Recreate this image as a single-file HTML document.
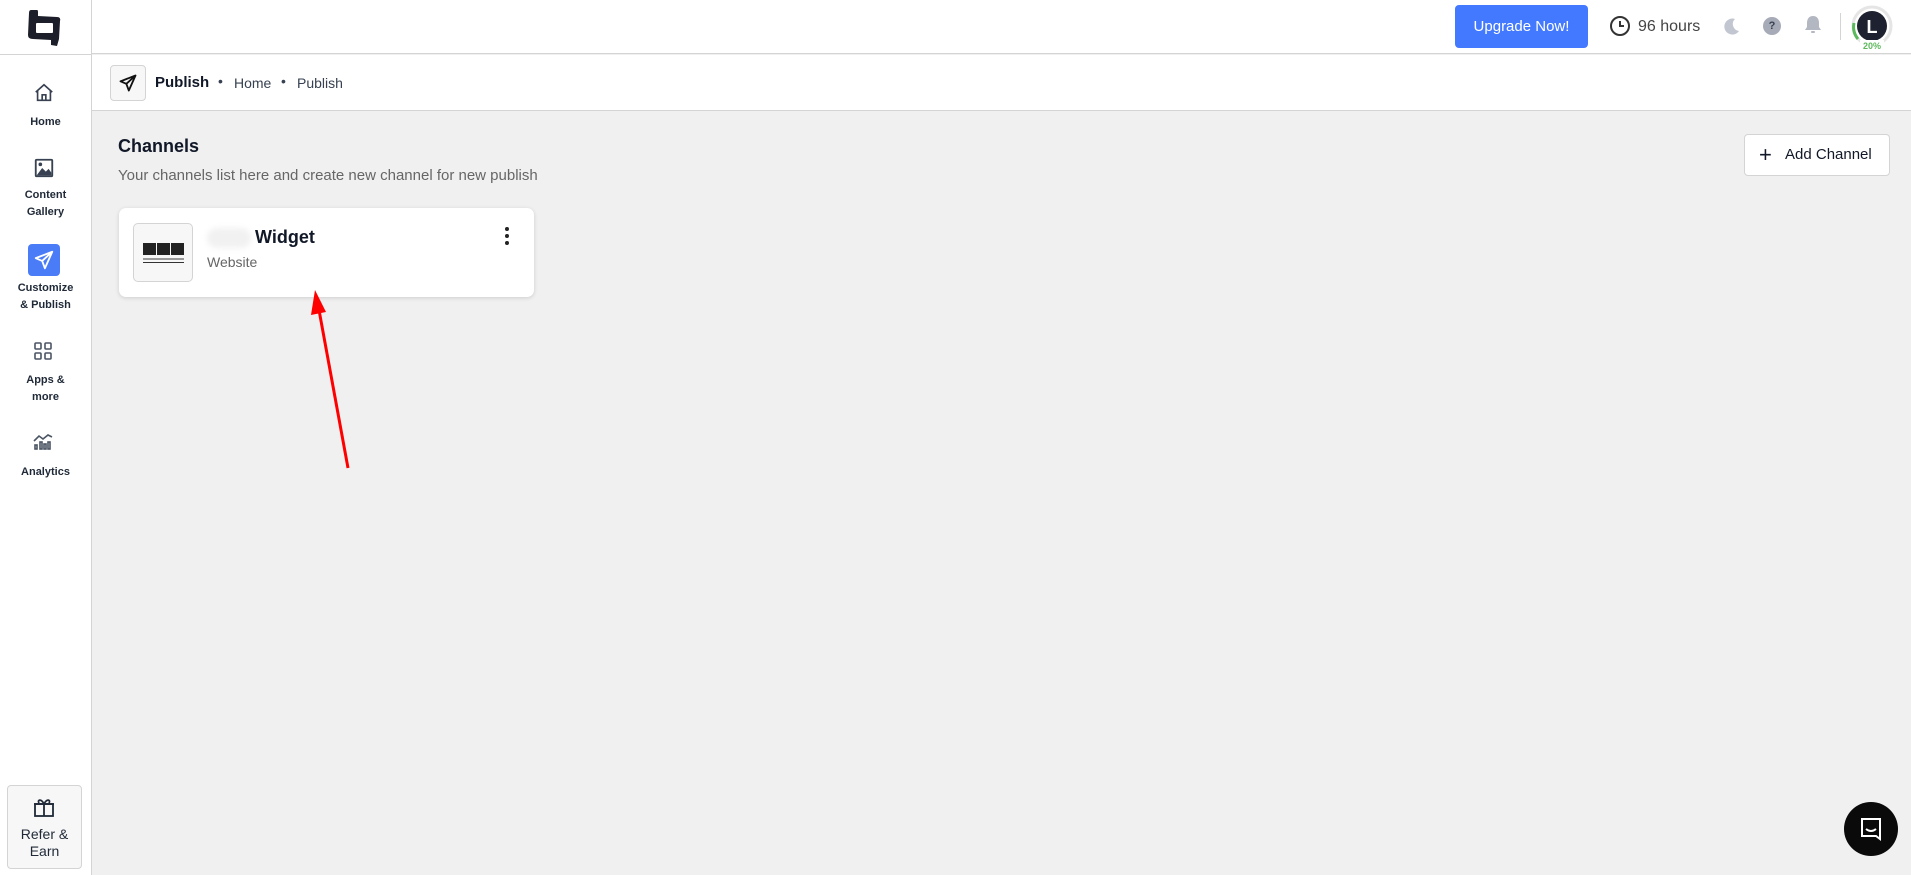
<!DOCTYPE html>
<html><head><meta charset="utf-8"><style>
*{box-sizing:border-box;margin:0;padding:0}
body{width:1911px;height:875px;overflow:hidden;font-family:"Liberation Sans",sans-serif;background:#f0f0f0;position:relative;color:#111827}
.abs{position:absolute}
#side{left:0;top:0;width:92px;height:875px;background:#fff;border-right:1px solid #d4d4d4}
#top{left:92px;top:0;right:0;height:54px;background:#fff;border-bottom:1px solid #d4d4d4}
#logoline{left:0;top:54px;width:92px;height:1px;background:#d4d4d4}
#crumb{left:92px;top:55px;right:0;height:56px;background:#fff;border-bottom:1px solid #d4d4d4}
.lbl{position:absolute;left:0;width:91px;text-align:center;font-size:11px;font-weight:bold;color:#1f2937;line-height:17px}
.ico{position:absolute;left:33px}
</style></head><body>
<div id="side" class="abs">
  <svg class="abs" style="left:26px;top:9px" width="36" height="38" viewBox="0 0 36 38"><path d="M5 1 L11 1 Q12 1 12 3 L12 7 L31 8 Q35 8 34 12 L33 30 L31 37 L25 36 L25 31 L7 30 Q2 30 2 26 L3 4 Q3 1 5 1Z" fill="#1c1f2a"/><rect x="10" y="14" width="17" height="10" rx="1" fill="#fff"/></svg>
  <svg class="ico" style="top:82px" width="22" height="22" viewBox="0 0 24 24" fill="none" stroke="#374151" stroke-width="1.8"><path d="M3 11 L12 3 L21 11 M5 9 V20 H19 V9 M10 20 V14 H14 V20"/></svg>
  <div class="lbl" style="top:114px">Home</div>
  <svg class="ico" style="top:157px" width="22" height="22" viewBox="0 0 24 24"><rect x="3" y="3" width="18" height="18" rx="1" fill="none" stroke="#374151" stroke-width="2"/><path d="M4 20 L10 12 L14 16 L17 13 L20 17 V20Z" fill="#374151"/><circle cx="8" cy="8" r="2" fill="#374151"/></svg>
  <div class="lbl" style="top:187px">Content<br>Gallery</div>
  <div class="abs" style="left:28px;top:244px;width:32px;height:32px;background:#4a7cf7;border-radius:4px"></div>
  <svg class="abs" style="left:33px;top:249px" width="22" height="22" viewBox="0 0 24 24" fill="none" stroke="#fff" stroke-width="2" stroke-linejoin="round"><path d="M21 3 L3 10 L10 13 L13 21 Z M10 13 L21 3"/></svg>
  <div class="lbl" style="top:280px">Customize<br>&amp; Publish</div>
  <svg class="ico" style="top:341px" width="20" height="20" viewBox="0 0 20 20" fill="none" stroke="#4b5563" stroke-width="1.6"><rect x="2" y="2" width="6" height="6" rx="1"/><rect x="12" y="2" width="6" height="6" rx="1"/><rect x="2" y="12" width="6" height="6" rx="1"/><rect x="12" y="12" width="6" height="6" rx="1"/></svg>
  <div class="lbl" style="top:372px">Apps &amp;<br>more</div>
  <svg class="ico" style="top:433px" width="20" height="18" viewBox="0 0 20 18" fill="none" stroke="#4b5563" stroke-width="1.6"><path d="M1 8 L6 3 L10 6 L15 2 L19 4"/><rect x="2" y="12" width="2" height="4"/><rect x="7" y="9" width="2" height="7"/><rect x="11" y="11" width="2" height="5"/><rect x="15" y="9" width="2" height="7"/></svg>
  <div class="lbl" style="top:464px">Analytics</div>
  <div class="abs" style="left:7px;top:785px;width:75px;height:84px;border:1px solid #d4d4d4;border-radius:4px;background:#f7f7f7"></div>
  <svg class="abs" style="left:32px;top:795px" width="24" height="24" viewBox="0 0 24 24" fill="none" stroke="#1f2937" stroke-width="1.8"><rect x="3" y="9" width="18" height="12"/><path d="M2 9 H22 M12 9 V21 M12 9 C9 3 5 5 7 8 M12 9 C15 3 19 5 17 8"/></svg>
  <div class="abs" style="left:7px;top:826px;width:75px;text-align:center;font-size:14px;line-height:17px;color:#1f2937">Refer &amp;<br>Earn</div>
</div>
<div id="logoline" class="abs"></div>
<div id="top" class="abs">
  <div class="abs" style="left:1363px;top:5px;width:133px;height:43px;background:#4379ff;border-radius:4px;color:#fff;font-size:15px;text-align:center;line-height:43px">Upgrade Now!</div>
  <svg class="abs" style="left:1517px;top:15px" width="22" height="22" viewBox="0 0 22 22" fill="none" stroke="#333" stroke-width="2"><circle cx="11" cy="11" r="9"/><path d="M11 6 V11 H15"/></svg>
  <div class="abs" style="left:1546px;top:18px;font-size:16px;color:#444">96 hours</div>
  <svg class="abs" style="left:1631px;top:17px" width="18" height="18" viewBox="0 0 18 18"><path d="M12 2 A8 8 0 1 0 16 14 A7 7 0 0 1 12 2Z" fill="#c2c6d0"/></svg>
  <div class="abs" style="left:1671px;top:17px;width:18px;height:18px;border-radius:50%;background:#a7abb8;color:#374151;font-size:11px;font-weight:bold;text-align:center;line-height:18px">?</div>
  <svg class="abs" style="left:1712px;top:15px" width="18" height="20" viewBox="0 0 18 20"><path d="M9 1 C5 1 3 4 3 8 V12 L1 15 H17 L15 12 V8 C15 4 13 1 9 1Z" fill="#b3b7c2"/><rect x="7" y="16" width="4" height="2" rx="1" fill="#b3b7c2"/></svg>
  <div class="abs" style="left:1748px;top:13px;width:1px;height:27px;background:#d4d4d4"></div>
  <svg class="abs" style="left:1758px;top:5px" width="44" height="46" viewBox="0 0 44 46"><circle cx="22" cy="21" r="19" fill="none" stroke="#e5e5e5" stroke-width="3"/><path d="M8 34 A19 19 0 0 1 4 18" fill="none" stroke="#5cb85c" stroke-width="3"/><circle cx="22" cy="21" r="15" fill="#1e2230"/><text x="22" y="28" font-family="Liberation Sans" font-weight="bold" font-size="18" fill="#fff" text-anchor="middle">L</text><rect x="10" y="35" width="24" height="11" fill="#fff"/><text x="22" y="44" font-family="Liberation Sans" font-weight="bold" font-size="9" fill="#5cb85c" text-anchor="middle">20%</text></svg>
</div>
<div id="crumb" class="abs">
  <div class="abs" style="left:18px;top:10px;width:36px;height:36px;border:1px solid #d4d4d4;border-radius:4px;background:#f7f7f7"></div>
  <svg class="abs" style="left:26px;top:18px" width="20" height="20" viewBox="0 0 24 24" fill="none" stroke="#111" stroke-width="2.2" stroke-linejoin="round"><path d="M21 3 L3 10 L10 13 L13 21 Z M10 13 L21 3"/></svg>
  <div class="abs" style="left:63px;top:19px;font-size:15px;font-weight:600;color:#111827">Publish</div>
  <div class="abs" style="left:126px;top:18px;font-size:14px;color:#374151">•</div>
  <div class="abs" style="left:142px;top:20px;font-size:14px;color:#374151">Home</div>
  <div class="abs" style="left:189px;top:18px;font-size:14px;color:#374151">•</div>
  <div class="abs" style="left:205px;top:20px;font-size:14px;color:#374151">Publish</div>
</div>
<div class="abs" style="left:118px;top:136px;font-size:18px;font-weight:600;color:#111827">Channels</div>
<div class="abs" style="left:118px;top:167px;font-size:15px;color:#666">Your channels list here and create new channel for new publish</div>
<div class="abs" style="left:1744px;top:134px;width:146px;height:42px;background:#fff;border:1px solid #d4d4d4;border-radius:4px;font-size:15px;color:#111827;line-height:40px;padding-left:40px">Add Channel</div>
<div class="abs" style="left:1759px;top:145px;font-size:22px;line-height:20px;color:#111827">+</div>
<div class="abs" style="left:119px;top:208px;width:415px;height:89px;background:#fff;border-radius:7px;box-shadow:0 1px 4px rgba(0,0,0,.15)">
  <div class="abs" style="left:14px;top:15px;width:60px;height:59px;border:1px solid #d4d4d4;border-radius:5px;background:#f7f7f7"></div>
  <div class="abs" style="left:24px;top:35px;width:13px;height:12px;background:#222"></div>
  <div class="abs" style="left:38px;top:35px;width:13px;height:12px;background:#222"></div>
  <div class="abs" style="left:52px;top:35px;width:13px;height:12px;background:#222"></div>
  <div class="abs" style="left:24px;top:50px;width:41px;height:2px;background:#999"></div>
  <div class="abs" style="left:24px;top:54px;width:41px;height:1px;background:#333"></div>
  <div class="abs" style="left:88px;top:20px;width:44px;height:20px;background:#f1f1f1;border-radius:10px;filter:blur(3px)"></div>
  <div class="abs" style="left:136px;top:19px;font-size:18px;font-weight:600;color:#111827">Widget</div>
  <div class="abs" style="left:88px;top:46px;font-size:14px;color:#666">Website</div>
  <div class="abs" style="left:386px;top:19px;width:4px;height:4px;border-radius:50%;background:#222;box-shadow:0 7px 0 #222,0 14px 0 #222"></div>
</div>
<svg class="abs" style="left:0;top:0" width="1911" height="875"><line x1="348" y1="468" x2="319" y2="310" stroke="#f00" stroke-width="3"/><path d="M315 290 L311 315 L326 312 Z" fill="#f00"/></svg>
<div class="abs" style="left:1844px;top:802px;width:54px;height:54px;border-radius:50%;background:#0a0a0a"></div>
<svg class="abs" style="left:1858px;top:816px" width="26" height="26" viewBox="0 0 26 26" fill="none" stroke="#fff" stroke-width="2"><path d="M4 3 H22 V23 L18 20 H4 Z"/><path d="M8 13 Q13 17 18 13"/></svg>
</body></html>
